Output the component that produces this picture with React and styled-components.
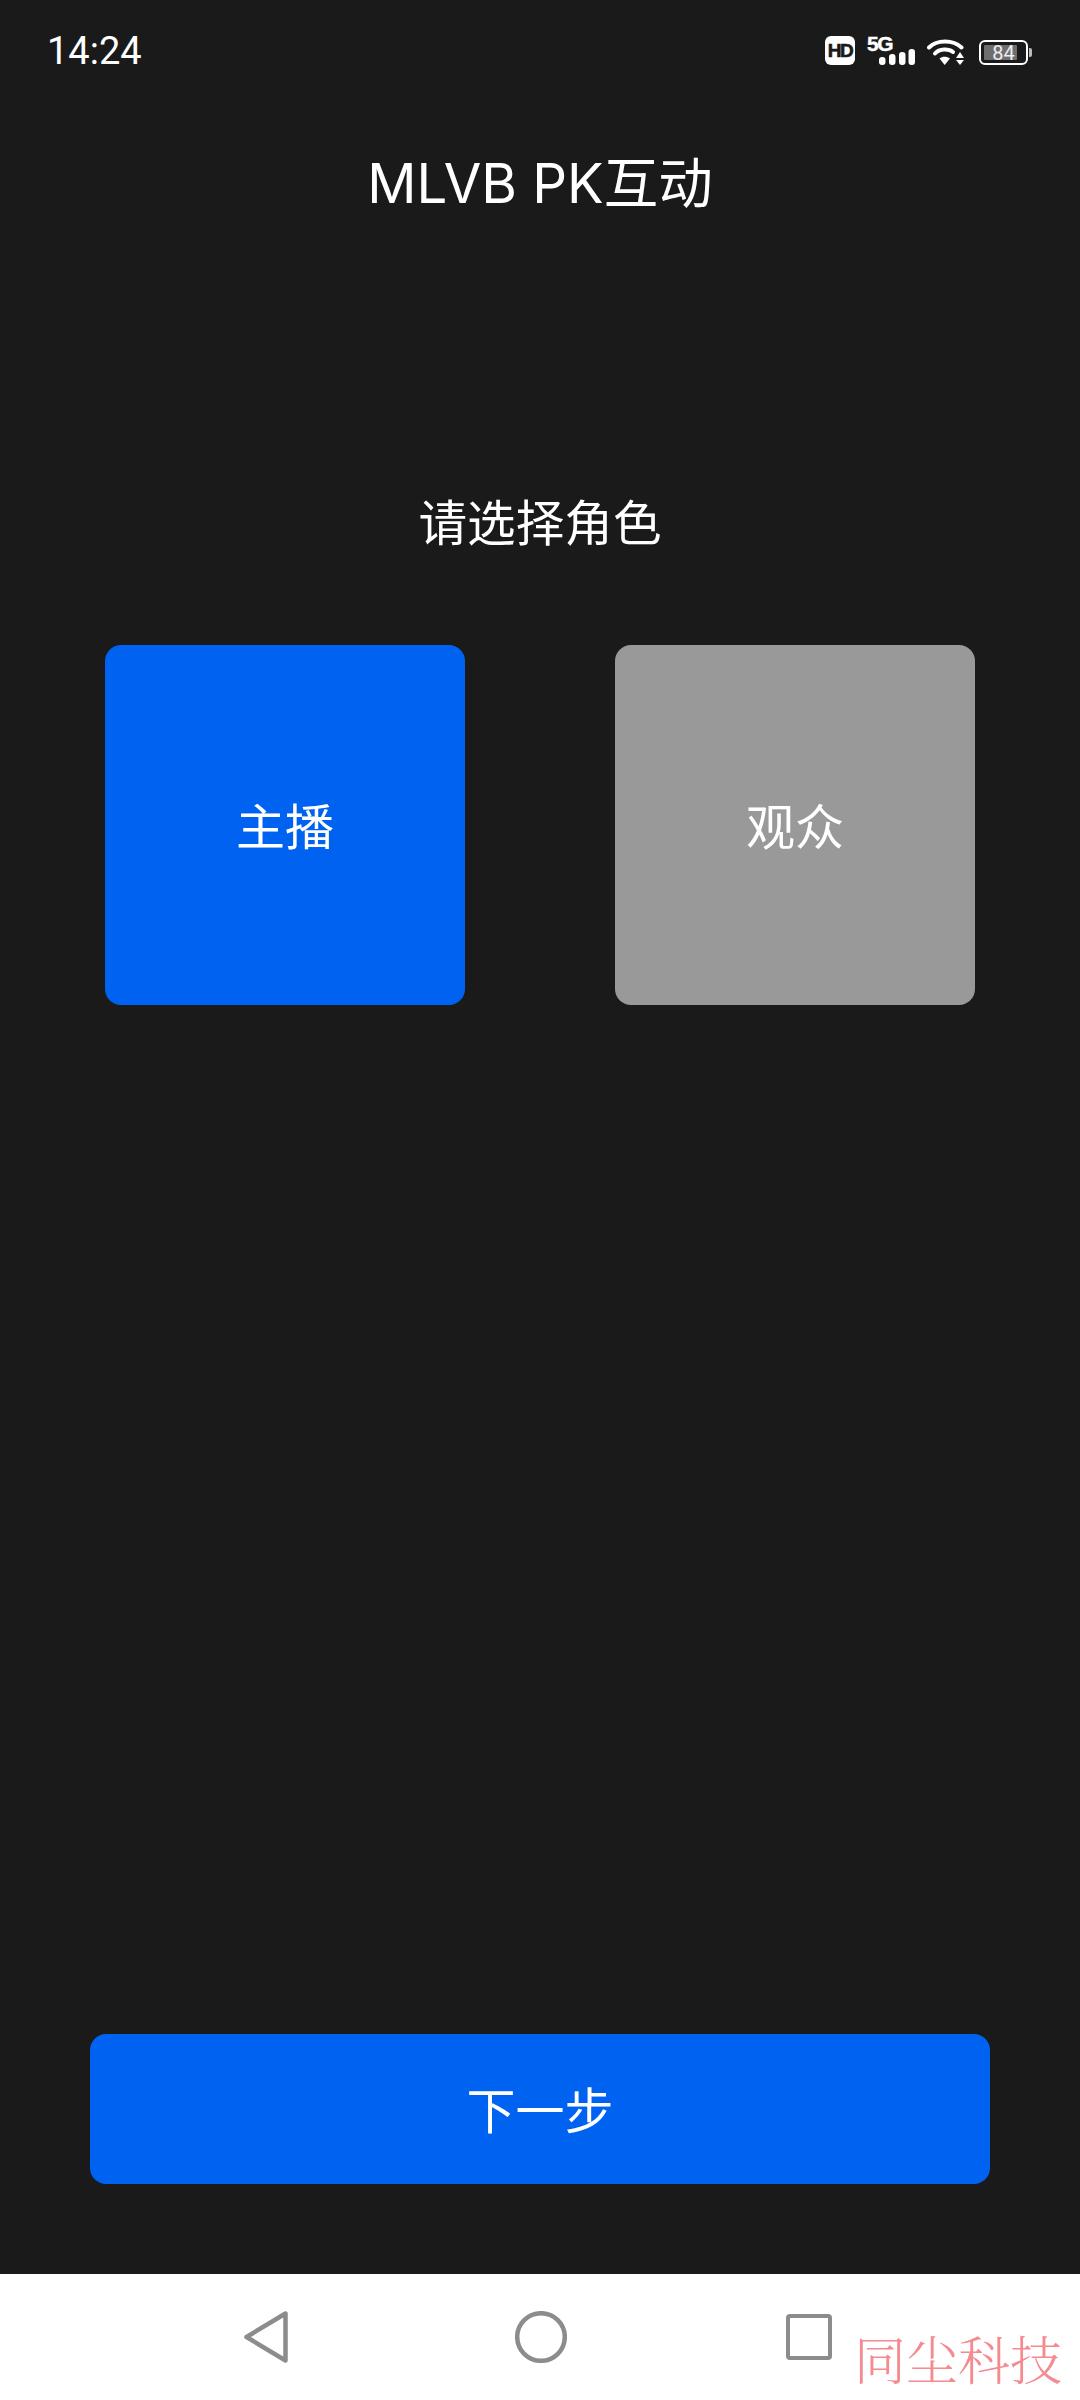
import styled, { createGlobalStyle } from 'styled-components';

const GlobalStyle = createGlobalStyle`
  html, body {
    margin: 0;
    padding: 0;
    background: #1a1a1a;
  }
  * {
    box-sizing: border-box;
  }
`;

function App() {
  return (
    <Page>
      <GlobalStyle />
      <StatusBar>
        <Clock>14:24</Clock>
        <StatusIcons>
          <HdBadge>HD</HdBadge>
          <Network>
            <NetworkLabel>5G</NetworkLabel>
            <svg width="36" height="16" viewBox="0 0 36 16">
              <rect x="0" y="8" width="6.5" height="8" rx="3" fill="#fff" />
              <rect x="10" y="5" width="6.5" height="11" rx="3" fill="#fff" />
              <rect x="20" y="3" width="6.5" height="13" rx="3" fill="#fff" />
              <rect x="29.5" y="0" width="6.5" height="16" rx="3" fill="#fff" />
            </svg>
          </Network>
          <svg width="37" height="27" viewBox="0 0 37 27">
            <path d="M2 9.5C10 1.5 26 1.5 34.5 9.5" fill="none" stroke="#fff" strokeWidth="4" strokeLinecap="round" />
            <path d="M8 15.5C12.5 10.5 21.5 10.5 26 14" fill="none" stroke="#fff" strokeWidth="4" strokeLinecap="round" />
            <path d="M12.5 20.5C15.5 18 19.5 18 23 20.5L17.7 27Z" fill="#fff" />
            <path d="M33 14L37 20H29Z" fill="#fff" />
            <path d="M29 22H37L33 27Z" fill="#fff" />
          </svg>
          <Battery>
            <BatteryShell>
              <BatteryFill $level={84} />
              <BatteryLevel>84</BatteryLevel>
            </BatteryShell>
            <BatteryTip />
          </Battery>
        </StatusIcons>
      </StatusBar>

      <Header>MLVB PK互动</Header>

      <Main>
        <Prompt>请选择角色</Prompt>
        <Roles>
          <RoleCard $active>主播</RoleCard>
          <RoleCard>观众</RoleCard>
        </Roles>
        <NextButton>下一步</NextButton>
      </Main>

      <NavBar>
        <svg width="44" height="52" viewBox="0 0 44 52">
          <path d="M41.5 2.5V49.5L2.5 26Z" fill="none" stroke="#8c8c8c" strokeWidth="4.5" strokeLinejoin="round" />
        </svg>
        <svg width="52" height="52" viewBox="0 0 52 52">
          <circle cx="26" cy="26" r="23.8" fill="none" stroke="#8c8c8c" strokeWidth="4.5" />
        </svg>
        <SquareKey />
        <Watermark>同尘科技</Watermark>
      </NavBar>
    </Page>
  );
}

export default App;

const sans = `Inter, "Noto Sans CJK SC", sans-serif`;

const Page = styled.div`
  width: 1080px;
  height: 2400px;
  display: flex;
  flex-direction: column;
  background: #1a1a1a;
  color: #fff;
  font-family: ${sans};
  overflow: hidden;
`;

const StatusBar = styled.div`
  height: 100px;
  flex: none;
  display: flex;
  align-items: flex-start;
  justify-content: space-between;
  padding: 36px 48px 0 47px;
`;

const Clock = styled.div`
  font-family: Roboto, sans-serif;
  font-size: 38px;
  line-height: 30px;
  color: #fff;
`;

const StatusIcons = styled.div`
  display: flex;
  align-items: flex-end;
  gap: 12px;
  height: 29px;
`;

const HdBadge = styled.div`
  width: 30px;
  height: 29px;
  border-radius: 6px;
  background: #fff;
  color: #1a1a1a;
  display: flex;
  align-items: center;
  justify-content: center;
  font-family: "Liberation Sans", sans-serif;
  font-size: 19px;
  font-weight: 700;
  letter-spacing: -1.5px;
  -webkit-text-stroke: 0.6px #1a1a1a;
`;

const Network = styled.div`
  position: relative;
  width: 48px;
  height: 29px;
  display: flex;
  align-items: flex-end;
  justify-content: flex-end;
`;

const NetworkLabel = styled.span`
  position: absolute;
  left: 0;
  top: -1px;
  font-family: "Liberation Sans", sans-serif;
  font-size: 21px;
  line-height: 18px;
  font-weight: 700;
  letter-spacing: -1.5px;
  -webkit-text-stroke: 0.4px #fff;
`;

const Battery = styled.div`
  display: flex;
  align-items: center;
  gap: 1px;
  height: 25px;
  margin-left: 3px;
`;

const BatteryShell = styled.div`
  position: relative;
  width: 49px;
  height: 25px;
  padding: 3px;
  border: 2px solid #fff;
  border-radius: 6px;
`;

const BatteryFill = styled.div`
  width: ${p => p.$level}%;
  height: 100%;
  background: #6e6e6e;
  border-radius: 1px;
`;

const BatteryLevel = styled.span`
  position: absolute;
  inset: 0;
  display: flex;
  align-items: center;
  justify-content: center;
  font-family: Roboto, sans-serif;
  font-size: 20px;
  color: #eee;
`;

const BatteryTip = styled.div`
  width: 3px;
  height: 9px;
  background: #bbb;
  border-radius: 0 2px 2px 0;
`;

const Header = styled.div`
  height: 158px;
  flex: none;
  display: flex;
  align-items: center;
  justify-content: center;
  font-size: 54.5px;
  font-weight: 400;
`;

const Main = styled.main`
  flex: 1;
  display: flex;
  flex-direction: column;
  align-items: center;
  padding-top: 232px;
`;

const Prompt = styled.div`
  font-size: 48.6px;
  line-height: 68px;
`;

const Roles = styled.div`
  width: 870px;
  margin-top: 87px;
  display: flex;
  justify-content: space-between;
`;

const RoleCard = styled.div`
  width: 360px;
  height: 360px;
  padding-bottom: 3px;
  border-radius: 16px;
  background: ${p => (p.$active ? '#0062f0' : '#999999')};
  display: flex;
  align-items: center;
  justify-content: center;
  font-size: 49px;
`;

const NextButton = styled.button`
  width: 900px;
  height: 150px;
  margin-top: auto;
  margin-bottom: 90px;
  padding: 0 0 4px;
  border: none;
  border-radius: 16px;
  background: #0062f0;
  color: #fff;
  font-family: ${sans};
  font-size: 49px;
`;

const NavBar = styled.nav`
  position: relative;
  height: 126px;
  flex: none;
  background: #fff;
  display: flex;
  align-items: flex-start;
  padding: 37px 0 0 244px;
  gap: 227px;
`;

const SquareKey = styled.div`
  width: 46px;
  height: 46px;
  margin-top: 3px;
  margin-left: -8px;
  border: 4.5px solid #8c8c8c;
  border-radius: 4px;
`;

const Watermark = styled.div`
  position: absolute;
  right: 18px;
  bottom: 12px;
  font-family: "Noto Serif CJK SC", "Noto Sans CJK SC", serif;
  font-size: 52px;
  line-height: 60px;
  font-weight: 300;
  color: #f58a90;
`;
